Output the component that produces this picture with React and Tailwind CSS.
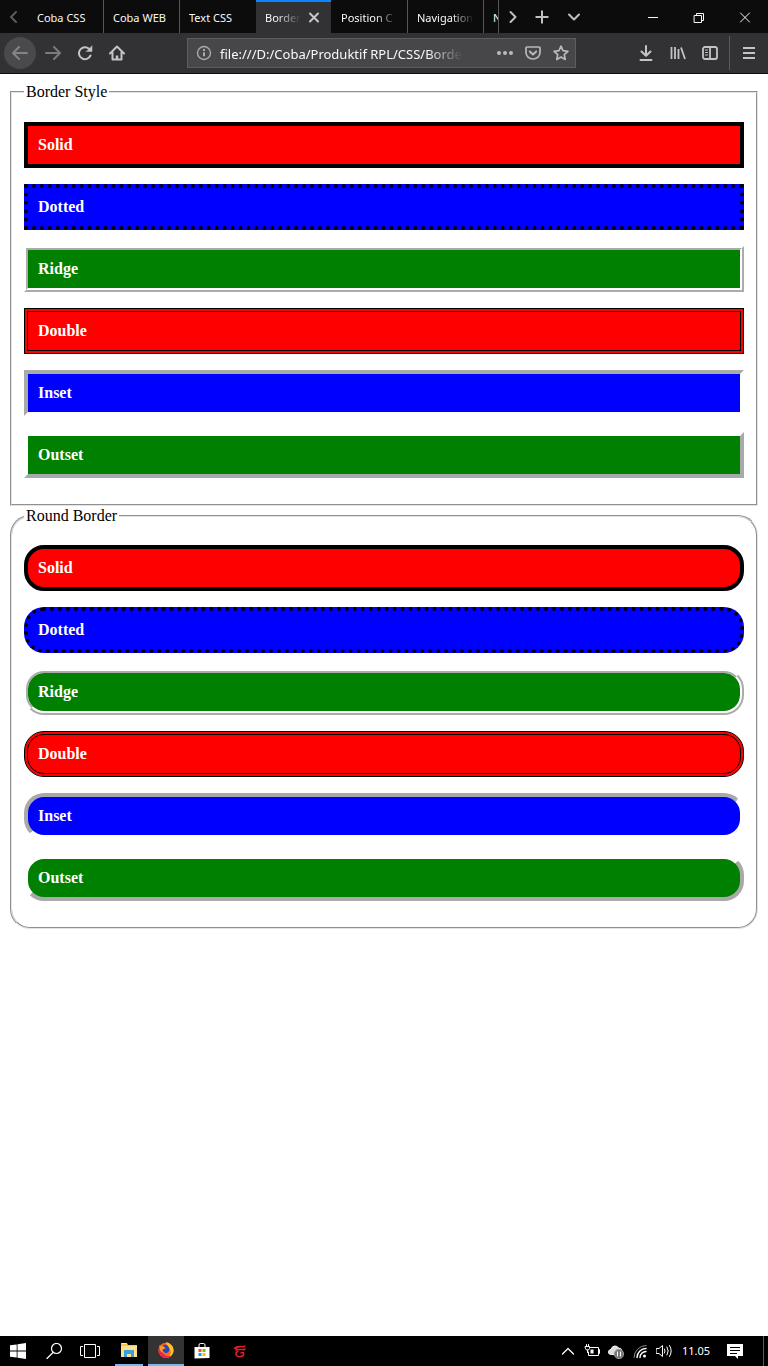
import React from "react";

const tabs = [
  { title: "Coba CSS" },
  { title: "Coba WEB" },
  { title: "Text CSS", plain: true },
  { title: "Border", active: true },
  { title: "Position C", fade: true },
  { title: "Navigation", fade: true },
  { title: "N" },
];

const boxes = [
  { label: "Solid", style: "border-solid border-black bg-[#ff0000]" },
  { label: "Dotted", style: "border-dotted border-black bg-[#0000ff]" },
  { label: "Ridge", style: "[border-style:ridge] border-white bg-[#008000]" },
  { label: "Double", style: "border-double border-black bg-[#ff0000]" },
  {
    label: "Inset",
    style: "border-solid border-t-[#a9a9a9] border-l-[#a9a9a9] border-b-white border-r-white bg-[#0000ff]",
  },
  {
    label: "Outset",
    style: "border-solid border-t-white border-l-white border-b-[#a9a9a9] border-r-[#a9a9a9] bg-[#008000]",
  },
];

function Icon({ size = 16, className = "", children, w = 2 }) {
  return (
    <svg
      width={size}
      height={size}
      viewBox="0 0 16 16"
      fill="none"
      stroke="currentColor"
      strokeWidth={w}
      strokeLinecap="round"
      strokeLinejoin="round"
      aria-hidden="true"
      className={`shrink-0 ${className}`}
    >
      {children}
    </svg>
  );
}

function IconButton({ label, className = "w-8", children }) {
  return (
    <button type="button" aria-label={label} className={`flex h-full shrink-0 items-center justify-center ${className}`}>
      {children}
    </button>
  );
}

function tabFade(active, fade) {
  if (active) return "w-9 [mask-image:linear-gradient(to_right,black_30%,transparent)]";
  if (fade) return "w-[57px] [mask-image:linear-gradient(to_right,black_60%,transparent)]";
  return "w-[57px]";
}

function Tab({ title, active, plain, fade }) {
  return (
    <div
      className={`relative flex w-19 shrink-0 items-center pl-[9px] pt-[3px] ${
        active ? "border-r border-[#0c0c0d] bg-[#323234]" : plain ? "" : "border-r border-[#57575a]"
      }`}
    >
      {active && <span className="absolute inset-x-0 top-0 h-0.5 bg-[#0a84ff]" />}
      <button type="button" className={`overflow-hidden whitespace-nowrap text-left ${tabFade(active, fade)}`}>
        {title}
      </button>
      {active && (
        <button type="button" aria-label="Close tab" className="ml-[5px] text-[#c8c8c9]">
          <Icon>
            <path d="M4 3.500l8 8M12 3.500l-8 8" />
          </Icon>
        </button>
      )}
    </div>
  );
}

function TabBar() {
  return (
    <div className="flex h-[33px] bg-[#0c0c0d] text-[11px] text-[#f9f9fa]">
      <IconButton label="Scroll tabs left" className="w-7 text-[#5c5c5d]">
        <Icon>
          <path d="M10 3L5 8l5 5" />
        </Icon>
      </IconButton>
      <div className="flex min-w-0 flex-1 overflow-hidden border-r border-[#57575a]">
        {tabs.map((t) => (
          <Tab key={t.title} {...t} />
        ))}
      </div>
      <IconButton label="Scroll tabs right" className="w-[27px] text-[#c0c0c1]">
        <Icon>
          <path d="M5.500 3l5 5-5 5" />
        </Icon>
      </IconButton>
      <IconButton label="New tab" className="w-8 text-[#c0c0c1]">
        <Icon>
          <path d="M8 1.500v13M1.500 8h13" strokeLinecap="butt" />
        </Icon>
      </IconButton>
      <IconButton label="List all tabs" className="mr-10 w-8 text-[#c0c0c1]">
        <Icon>
          <path d="M3 5.500l5 5 5-5" />
        </Icon>
      </IconButton>
      <IconButton label="Minimize" className="w-[46px]">
        <Icon w={1}>
          <path d="M3 8.500h10" strokeLinecap="butt" />
        </Icon>
      </IconButton>
      <IconButton label="Restore" className="w-[46px]">
        <Icon w={1}>
          <path d="M3.500 6.500h7v7h-7zM5.500 6.500v-2h7v7h-2" />
        </Icon>
      </IconButton>
      <IconButton label="Close" className="w-[46px]">
        <Icon w={1}>
          <path d="M3.500 4l9 9M12.500 4l-9 9" />
        </Icon>
      </IconButton>
    </div>
  );
}

function Toolbar() {
  return (
    <div className="flex h-[41px] items-center border-b border-[#0c0c0d] bg-[#323234] pl-1 pr-[3px] text-[#c4c4c5]">
      <button
        type="button"
        aria-label="Back"
        className="mr-px flex size-8 shrink-0 items-center justify-center rounded-full bg-[#4a4a4c] text-[#848486]"
      >
        <Icon>
          <path d="M15 8H1.500M7 2L1 8l6 6" />
        </Icon>
      </button>
      <IconButton label="Forward" className="w-8 text-[#7b7b7d]">
        <Icon>
          <path d="M1 8h13.500M9 2l6 6-6 6" />
        </Icon>
      </IconButton>
      <IconButton label="Reload">
        <Icon>
          <path d="M13.500 10.500A6 6 0 1 1 12 3.800" />
          <path d="M15 1v5.500H9.500z" fill="currentColor" strokeWidth="0.5" />
        </Icon>
      </IconButton>
      <IconButton label="Home">
        <Icon>
          <path d="M1 8.500L8 1.500l7 7M3.500 7.500V14.500h9V7.500" />
          <path d="M8 14v-3.500" strokeWidth="2.500" strokeLinecap="butt" />
        </Icon>
      </IconButton>
      <div className="mx-[54px] flex h-[30px] min-w-0 flex-1 items-center border border-[#5d5d5f] bg-[#474749]">
        <IconButton label="Site information" className="w-8 text-[#a9a9aa]">
          <Icon w={1.4}>
            <circle cx="8" cy="8" r="6.500" />
            <path d="M8 7.300v4" strokeWidth="2" strokeLinecap="butt" />
            <circle cx="8" cy="4.900" r="0.500" />
          </Icon>
        </IconButton>
        <input
          type="text"
          aria-label="Address"
          defaultValue="file:///D:/Coba/Produktif RPL/CSS/Border"
          className="mr-7 h-full min-w-0 flex-1 bg-transparent pt-0.5 text-[13px] text-[#f9f9fa] outline-none [mask-image:linear-gradient(to_right,black_85%,transparent)]"
        />
        <IconButton label="Page actions" className="w-7 text-[#b9b9ba]">
          <Icon className="w-[18px]">
            <g fill="currentColor" stroke="none">
              <circle cx="2" cy="8" r="2" />
              <circle cx="8" cy="8" r="2" />
              <circle cx="14" cy="8" r="2" />
            </g>
          </Icon>
        </IconButton>
        <IconButton label="Save to Pocket" className="w-7 text-[#b9b9ba]">
          <Icon>
            <path d="M2 2h12q1 0 1 1v4.500a7 6.500 0 0 1-14 0V3q0-1 1-1z" strokeWidth="1.700" />
            <path d="M4.800 6.500L8 9.500l3.200-3" />
          </Icon>
        </IconButton>
        <IconButton label="Bookmark" className="w-7 text-[#b9b9ba]">
          <Icon w={1.7}>
            <path d="M8 1.200l2 4.500 4.900.6-3.600 3.300.9 4.900L8 12.100l-4.200 2.400.9-4.900L1.100 6.300 6 5.700z" />
          </Icon>
        </IconButton>
      </div>
      <IconButton label="Downloads">
        <Icon>
          <path d="M8 1v9M3.500 6.500L8 10.800l4.500-4.300M2.500 15h11" />
        </Icon>
      </IconButton>
      <IconButton label="Library">
        <Icon>
          <path d="M1.500 2v12M5 2v12M8.500 4v10M11 2.500l4 11.500" strokeWidth="1.800" strokeLinecap="butt" />
        </Icon>
      </IconButton>
      <IconButton label="Sidebars">
        <Icon w={1.8}>
          <rect x="1" y="2" width="14" height="12" rx="2" />
          <path d="M8 2v12" />
          <path d="M3.500 5h2M3.500 7.500h2M3.500 10h2" strokeWidth="1" />
        </Icon>
      </IconButton>
      <span className="mx-[3px] h-[34px] w-px shrink-0 bg-[#5b5b5d]" />
      <IconButton label="Open menu">
        <Icon>
          <path d="M2 3h12M2 8h12M2 13h12" strokeLinecap="butt" />
        </Icon>
      </IconButton>
    </div>
  );
}

function BorderGroup({ title, rounded }) {
  return (
    <fieldset
      className={`mx-0.5 min-w-0 border-2 border-[#e4e4e4] px-3 pb-2.5 [border-style:groove] ${
        rounded ? "rounded-[20px] pt-1" : "pt-[5px]"
      }`}
    >
      <legend className="px-0.5 pt-px">{title}</legend>
      <div className="flex flex-col gap-4 py-4">
        {boxes.map((b) => (
          <p key={b.label} className={`border-4 p-2.5 font-bold text-white ${b.style} ${rounded ? "rounded-[20px]" : ""}`}>
            {b.label}
          </p>
        ))}
      </div>
    </fieldset>
  );
}

function Taskbar() {
  return (
    <footer className="flex h-[30px] items-center bg-black text-white">
      <IconButton label="Start" className="w-9">
        <Icon>
          <path
            d="M0 2.300L6.700 1.400V7.500H0zM7.500 1.300L16 0v7.500H7.500zM0 8.400h6.700v6.200L0 13.700zM7.500 8.400H16V16l-8.500-1.200z"
            fill="currentColor"
            stroke="none"
          />
        </Icon>
      </IconButton>
      <IconButton label="Search" className="w-9">
        <Icon w={1.2}>
          <circle cx="10.500" cy="5.500" r="5" />
          <path d="M7 9.500L1 15.500" />
        </Icon>
      </IconButton>
      <IconButton label="Task view" className="mr-[7px] w-9">
        <svg width="20" height="16" viewBox="0 0 20 16" fill="none" stroke="currentColor" aria-hidden="true">
          <path d="M4.500 1.500h11v13h-11zM3 3.500H.500v9H3M17 3.500h2.500v9H17" />
        </svg>
      </IconButton>
      <IconButton label="File Explorer" className="mr-[5px] w-7 border-b-2 border-[#76b9ed]">
        <svg width="18" height="16" viewBox="0 0 18 16" aria-hidden="true">
          <path d="M1 1h6l1 2h9v12H1z" fill="#f5c64b" />
          <path d="M1 4h16v11H1z" fill="#ffe08a" />
          <path d="M2 1.500h4" stroke="#fff0b0" />
          <path d="M4 8h10v7h-3v-3H7v3H4z" fill="#3aa0dc" />
        </svg>
      </IconButton>
      <IconButton label="Firefox" className="w-9 border-b-2 border-[#76b9ed] bg-[#333333]">
        <svg width="16" height="16" viewBox="0 0 16 16" aria-hidden="true">
          <circle cx="8" cy="8.300" r="7.600" fill="#ff6a1c" />
          <path d="M8 0c4 1 7.500 4 7.600 8.300-.1 4-3.400 7.600-7.600 7.600 3-1 4.700-3 4.700-6C12.500 6 9 4 8 0z" fill="#ffc32b" />
          <path d="M1 5.500c-2 6 2 10.300 7 10.400 2.300 0 4-.9 5.200-2.100-5 1.200-10.200-1.800-9.200-8.800z" fill="#f0234f" />
          <path d="M5 3c3-1 6 1 6.300 4.300C11.500 10.200 8.500 12 6 10.500 4.500 9.500 4 8 4.500 7l3-.6L5.500 5z" fill="#2548b8" />
          <path d="M1.500 3l2 1.500 2-.3 2 2-2.500 1C4 7.500 4.500 10 7 10.500 3 11.500 1 8 1.500 3z" fill="#ff9824" />
        </svg>
      </IconButton>
      <IconButton label="Store" className="w-9">
        <svg width="16" height="16" viewBox="0 0 16 16" aria-hidden="true">
          <path d="M5 4.500V2q0-1.500 1.500-1.500h3Q11 .500 11 2v2.500" fill="none" stroke="#fff" />
          <path d="M.500 4h15v11l-15 .500z" fill="#fff" />
          <path d="M4.500 6H7.500v3H4.500z" fill="#f25022" />
          <path d="M8.500 6h3v3h-3z" fill="#7fba00" />
          <path d="M4.500 10h3v3h-3z" fill="#00a4ef" />
          <path d="M8.500 10h3v3h-3z" fill="#ffb900" />
        </svg>
      </IconButton>
      <IconButton label="Garena" className="w-10">
        <Icon className="text-[#e02028]" w={1.6}>
          <path
            d="M1.500 5.500C3 3 7 2.500 10.500 3L14 2.200 12.500 4.500C9 4 6 4.500 4.500 6L14 5.500 13 7.500C9 7 5 7.500 2.500 8.500L4 6.500z"
            fill="currentColor"
            stroke="none"
          />
          <path d="M6.500 8.500C4 8.500 3 11 5 12.800c2 1.500 5.500 1 6.500-.8v-2.200H8.500" strokeLinecap="butt" />
        </Icon>
      </IconButton>

      <div className="ml-auto flex h-full items-center">
        <IconButton label="Show hidden icons" className="w-6">
          <Icon w={1.3}>
            <path d="M2.500 11L8 5.500l5.500 5.500" />
          </Icon>
        </IconButton>
        <IconButton label="Battery" className="w-6">
          <Icon w={1}>
            <path d="M6.500 4.500h8v8h-10V9M14.500 6.500h1v4h-1M2.500 1.500v2M4.500 1.500v2M1.500 3.500h4v2l-1 1.500h-2l-1-1.500zM3.500 7v2.500" />
            <path d="M6.500 6.500h3v4h-3z" fill="currentColor" stroke="none" />
          </Icon>
        </IconButton>
        <IconButton label="OneDrive" className="w-6">
          <Icon w={1}>
            <path d="M3.500 11.500Q0 11.500.500 8.500 1 6.500 3 6.500 4 3 7 3q2.500 0 3.500 2 3 0 3.500 3v3.500z" fill="#ddd" />
            <circle cx="11" cy="11" r="4.700" fill="#777" stroke="#999" />
            <path d="M9.500 9v4M12.500 9v4" stroke="#fff" strokeWidth="1" />
          </Icon>
        </IconButton>
        <IconButton label="Network" className="w-6">
          <Icon w={1}>
            <path d="M2 14.500A12 12 0 0 1 14 2.500" stroke="#8b8b8b" />
            <path d="M5 14.500a9 9 0 0 1 9-9M8 14.500a6 6 0 0 1 6-6" strokeWidth="1.400" />
            <circle cx="12.500" cy="13" r="1.500" fill="currentColor" stroke="none" />
          </Icon>
        </IconButton>
        <IconButton label="Volume" className="w-6">
          <Icon w={1}>
            <path d="M.500 5.500H3L6.500 2.500v11L3 10.500H.500zM8.500 6q1.200 2 0 4M11 4q2.500 4 0 8M13.500 2.500q3.500 5.500 0 11" />
          </Icon>
        </IconButton>
        <time className="w-10 text-center text-[11px]">11.05</time>
        <IconButton label="Notifications" className="ml-[11px] mr-5 w-4">
          <Icon>
            <path d="M0 1h16v12h-5v3l-3-3H0z" fill="currentColor" stroke="none" />
            <path d="M3 4.500h10M3 7.500h10M3 10.500h7" stroke="#000" strokeWidth="1" strokeLinecap="butt" />
          </Icon>
        </IconButton>
        <span className="mr-1 h-full w-px bg-[#5a5a5a]" />
      </div>
    </footer>
  );
}

export default function App() {
  return (
    <div className="flex min-h-screen flex-col bg-white font-['Noto_Sans',sans-serif]">
      <header className="text-white">
        <TabBar />
        <Toolbar />
      </header>
      <main className="flex-1 p-2 font-['Liberation_Serif',serif] text-[16px] leading-[18px] text-black">
        <BorderGroup title="Border Style" />
        <BorderGroup title="Round Border" rounded />
      </main>
      <Taskbar />
    </div>
  );
}
